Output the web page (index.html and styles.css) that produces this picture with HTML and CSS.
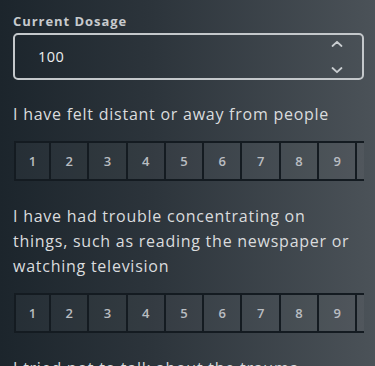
FILE: index.html
```html
<!DOCTYPE html>
<html lang="en">
<head>
  <meta charset="UTF-8">
  <title>Questionnaire</title>
  <link rel="stylesheet" href="styles.css">
</head>
<body>
  <div class="field-label">Current Dosage</div>
  <div class="dosage">
    <span class="dosage-value">100</span>
    <div class="spinner">
      <svg width="12" height="8" viewBox="0 0 12 8"><polyline points="1.5,6 6,1.8 10.5,6" /></svg>
      <svg width="12" height="8" viewBox="0 0 12 8"><polyline points="1.5,2 6,6.2 10.5,2" /></svg>
    </div>
  </div>

  <!-- questions -->
  <p class="question">I have felt distant or away from people</p>
  <div class="scale-wrap">
    <div class="scale">
      <div class="cell first">1</div>
      <div class="cell">2</div>
      <div class="cell">3</div>
      <div class="cell">4</div>
      <div class="cell">5</div>
      <div class="cell">6</div>
      <div class="cell">7</div>
      <div class="cell">8</div>
      <div class="cell">9</div>
      <div class="cell">10</div>
    </div>
  </div>

  <p class="question">I have had trouble concentrating on things, such as reading the newspaper or watching television</p>
  <div class="scale-wrap">
    <div class="scale">
      <div class="cell first">1</div>
      <div class="cell">2</div>
      <div class="cell">3</div>
      <div class="cell">4</div>
      <div class="cell">5</div>
      <div class="cell">6</div>
      <div class="cell">7</div>
      <div class="cell">8</div>
      <div class="cell">9</div>
      <div class="cell">10</div>
    </div>
  </div>

  <p class="question">I tried not to talk about the trauma</p>
</body>
</html>
```

FILE: styles.css
```css
html { background: #1d262d; }
body {
  margin: 0;
  padding: 11px 11px 0 13px;
  height: 366px;
  box-sizing: border-box;
  overflow: hidden;
  background: linear-gradient(90deg, #1c252c 0%, #2c343b 40%, #4b5258 100%);
  font-family: "Open Sans", "Liberation Sans", sans-serif;
  color: #dcdee0;
}
.field-label { font-size: 13px; font-weight: 700; line-height: 20px; color: #c7cacd; margin-bottom: 2px; letter-spacing: 0.95px; }
.dosage {
  display: flex; align-items: center; justify-content: space-between;
  height: 43px; border: 2px solid #c4c8cb; border-radius: 5px;
  padding: 0 19px 0 23px;
}
.dosage-value { font-size: 14.5px; font-weight: 500; color: #eceeef; letter-spacing: 0.4px; }
.spinner { display: flex; flex-direction: column; gap: 18px; }
.spinner svg { display: block; }
.spinner polyline { fill: none; stroke: #c9cdd0; stroke-width: 1.8; stroke-linecap: round; stroke-linejoin: round; }
.question { margin: 23px 0 14px; font-size: 16px; font-weight: 500; line-height: 25px; color: #dadcde; letter-spacing: 0.75px; }
.question:first-of-type { margin-top: 22px; }
.scale-wrap { overflow: hidden; margin-left: 1px; }
.scale {
  display: flex; height: 36px;
  border-top: 2px solid #141b21; border-bottom: 2px solid #141b21; border-left: 2px solid #141b21;
}
.cell {
  flex: 0 0 36.3px; border-right: 2px solid #141b21;
  display: flex; align-items: center; justify-content: center;
  background: rgba(255, 255, 255, 0.04);
  font-size: 13px; font-weight: 600; color: #b9bdc1;
}
.cell.first { flex-basis: 33px; }
```
